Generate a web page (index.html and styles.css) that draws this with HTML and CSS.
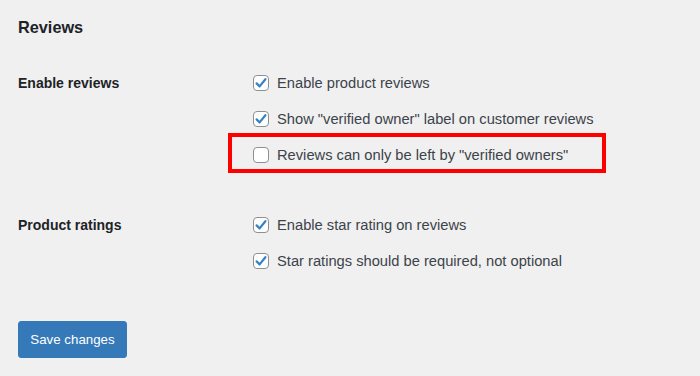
FILE: index.html
```html
<!DOCTYPE html>
<html lang="en">
<head>
    <meta charset="UTF-8">
    <meta name="viewport" content="width=device-width, initial-scale=1.0">
    <title>Reviews settings</title>
    <link rel="stylesheet" href="styles.css">
</head>
<body>
    <div class="wrap">
        <h2 class="section-title">Reviews</h2>

        <div class="settings">
            <div class="setting-row">
                <div class="setting-label">Enable reviews</div>
                <div class="options">
                    <label class="option">
                        <span class="check is-checked">
                            <svg viewBox="0 0 16 16" width="16" height="16"><path d="M3.6 8.4 L6.6 11.4 L12.4 4.2" fill="none" stroke="#3582c4" stroke-width="2.2" stroke-linecap="round" stroke-linejoin="round"/></svg>
                        </span>
                        Enable product reviews
                    </label>
                    <label class="option">
                        <span class="check is-checked">
                            <svg viewBox="0 0 16 16" width="16" height="16"><path d="M3.6 8.4 L6.6 11.4 L12.4 4.2" fill="none" stroke="#3582c4" stroke-width="2.2" stroke-linecap="round" stroke-linejoin="round"/></svg>
                        </span>
                        Show "verified owner" label on customer reviews
                    </label>
                    <label class="option highlighted">
                        <span class="check"></span>
                        Reviews can only be left by "verified owners"
                    </label>
                </div>
            </div>

            <div class="setting-row">
                <div class="setting-label">Product ratings</div>
                <div class="options">
                    <label class="option">
                        <span class="check is-checked">
                            <svg viewBox="0 0 16 16" width="16" height="16"><path d="M3.6 8.4 L6.6 11.4 L12.4 4.2" fill="none" stroke="#3582c4" stroke-width="2.2" stroke-linecap="round" stroke-linejoin="round"/></svg>
                        </span>
                        Enable star rating on reviews
                    </label>
                    <label class="option">
                        <span class="check is-checked">
                            <svg viewBox="0 0 16 16" width="16" height="16"><path d="M3.6 8.4 L6.6 11.4 L12.4 4.2" fill="none" stroke="#3582c4" stroke-width="2.2" stroke-linecap="round" stroke-linejoin="round"/></svg>
                        </span>
                        Star ratings should be required, not optional
                    </label>
                </div>
            </div>
        </div>

        <button class="button-primary" type="button">Save changes</button>
    </div>
</body>
</html>
```

FILE: styles.css
```css
*,
*::before,
*::after {
    margin: 0;
    padding: 0;
    box-sizing: border-box;
}

body {
    font-family: 'Liberation Sans', Arial, sans-serif;
    background: #f0f0f0;
    color: #1d2327;
    width: 700px;
    height: 376px;
    overflow: hidden;
}

.wrap {
    padding: 17px 0 0 18px;
}

.section-title {
    font-size: 16.3px;
    font-weight: 700;
    line-height: 20px;
    color: #1d2327;
}

.settings {
    display: flex;
    flex-direction: column;
    gap: 34px;
    margin-top: 28px;
}

.setting-row {
    display: grid;
    grid-template-columns: 235px auto;
}

.setting-label {
    font-size: 14px;
    font-weight: 700;
    line-height: 36px;
    color: #1d2327;
}

.options {
    display: flex;
    flex-direction: column;
}

.option {
    display: flex;
    align-items: center;
    gap: 8px;
    height: 36px;
    font-size: 14.7px;
    color: #3c434a;
    position: relative;
}

.check {
    width: 16px;
    height: 16px;
    border: 1px solid #8c8f94;
    border-radius: 4px;
    background: #fff;
    display: flex;
    align-items: center;
    justify-content: center;
    flex-shrink: 0;
}

.check svg {
    display: block;
    margin: -1px;
}

/* red annotation box around the option */
.highlighted::after {
    content: "";
    position: absolute;
    left: -25px;
    top: -4px;
    width: 378px;
    height: 40px;
    border: 4px solid #ff0000;
}

.button-primary {
    margin-top: 42px;
    width: 109px;
    height: 37px;
    background: #3579b8;
    border: 1px solid #3579b8;
    border-radius: 3px;
    color: #fff;
    font-family: 'Liberation Sans', Arial, sans-serif;
    font-size: 13.3px;
    cursor: pointer;
}
```
